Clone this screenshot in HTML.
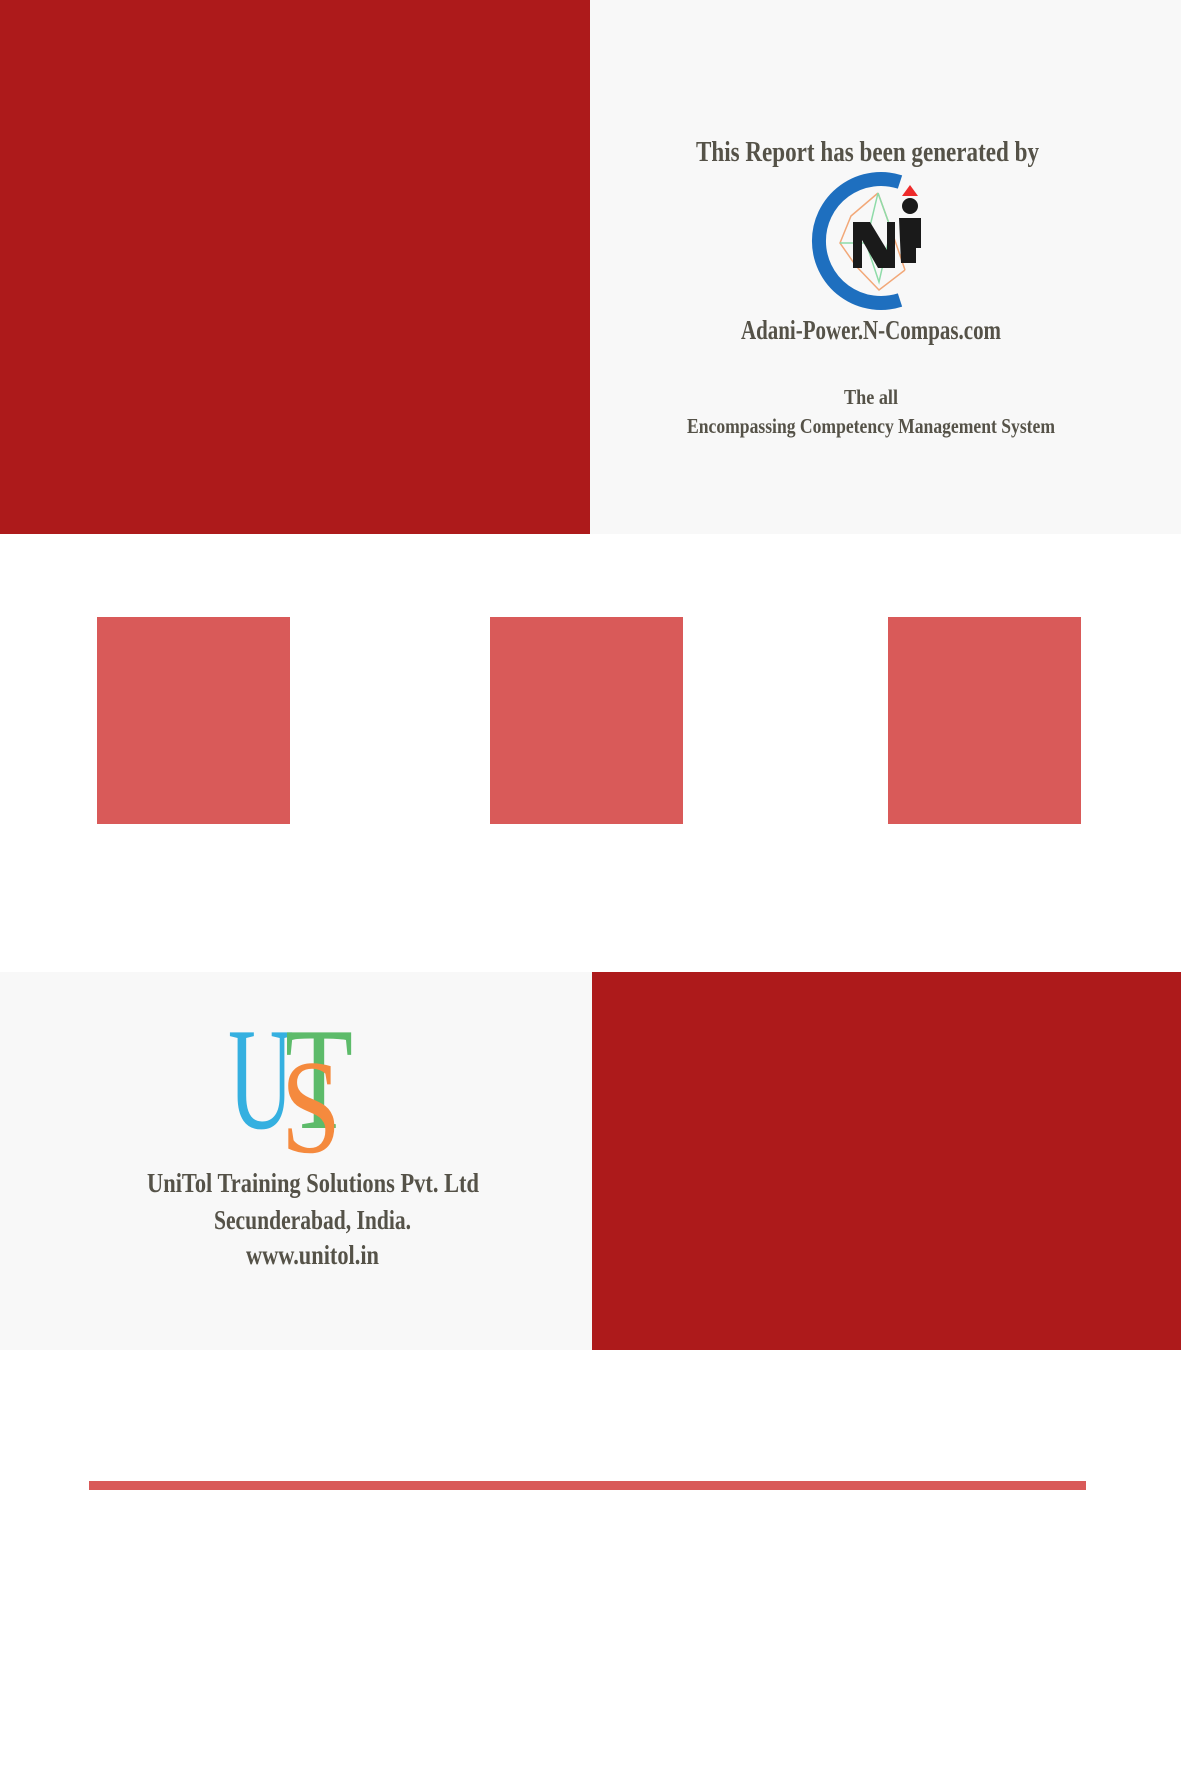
<!DOCTYPE html>
<html><head><meta charset="utf-8"><style>html,body{margin:0;padding:0;background:#fff}svg{display:block}</style></head>
<body>
<svg width="1181" height="1772" viewBox="0 0 1181 1772" xmlns="http://www.w3.org/2000/svg">
<rect x="0" y="0" width="1181" height="1772" fill="#fff"/>
<rect x="0" y="0" width="590" height="534" fill="#AD1A1B"/>
<rect x="590" y="0" width="591" height="534" fill="#F8F8F8"/>
<rect x="97" y="617" width="193" height="207" fill="#D95A59"/>
<rect x="490" y="617" width="193" height="207" fill="#D95A59"/>
<rect x="888" y="617" width="193" height="207" fill="#D95A59"/>
<rect x="0" y="972" width="592" height="378" fill="#F8F8F8"/>
<rect x="592" y="972" width="589" height="378" fill="#AD1A1B"/>
<rect x="89" y="1481" width="997" height="9" fill="#D95A59"/>
<g font-family="Liberation Serif, serif" font-weight="bold" fill="#555248">
<text x="696" y="161" font-size="28" textLength="343" lengthAdjust="spacingAndGlyphs">This Report has been generated by</text>
<text x="741" y="339" font-size="27" textLength="260" lengthAdjust="spacingAndGlyphs">Adani-Power.N-Compas.com</text>
<text x="844" y="404" font-size="21" textLength="54" lengthAdjust="spacingAndGlyphs">The all</text>
<text x="687" y="433" font-size="21" textLength="368" lengthAdjust="spacingAndGlyphs">Encompassing Competency Management System</text>
<text x="147" y="1192" font-size="27" textLength="332" lengthAdjust="spacingAndGlyphs">UniTol Training Solutions Pvt. Ltd</text>
<text x="214" y="1229" font-size="27" textLength="197" lengthAdjust="spacingAndGlyphs">Secunderabad, India.</text>
<text x="246" y="1264" font-size="27" textLength="133" lengthAdjust="spacingAndGlyphs">www.unitol.in</text>
</g>
<!-- N-Compas logo -->
<g>
<path d="M900 182 A62 62 0 1 0 900 300" fill="none" stroke="#1E6FBF" stroke-width="14"/>
<polyline points="878,193 851,216 840,243 856,266 879,290 905,270" fill="none" stroke="#F2A878" stroke-width="1.5"/>
<polyline points="878,193 891,229 905,270" fill="none" stroke="#F2A878" stroke-width="1.5"/>
<polyline points="878,193 866,243 879,282 891,229 878,193" fill="none" stroke="#8EDBA8" stroke-width="1.5"/>
<polyline points="840,243 866,243" fill="none" stroke="#8EDBA8" stroke-width="1.5"/>
<polygon points="853,222 870,222 887,250 887,222 895,222 895,268 878,268 862,240 862,268 853,268" fill="#1a1a1a"/>
<circle cx="910" cy="206" r="8" fill="#1a1a1a"/>
<path d="M899 218 h22 v30 h-5 v15 h-15 z" fill="#1a1a1a"/>
<polygon points="910,185 902,196 918,196" fill="#EE2B2B"/>
</g>
<!-- UTS logo -->
<g font-family="Liberation Serif, serif">
<text x="228" y="1128" font-size="146" fill="#35B0E0" textLength="66" lengthAdjust="spacingAndGlyphs">U</text>
<text x="285" y="1128" font-size="146" fill="#5DBB6A" textLength="68" lengthAdjust="spacingAndGlyphs">T</text>
<text x="281" y="1152" font-size="134" fill="#F58A3E" textLength="60" lengthAdjust="spacingAndGlyphs">S</text>
</g>
</svg>
</body></html>
